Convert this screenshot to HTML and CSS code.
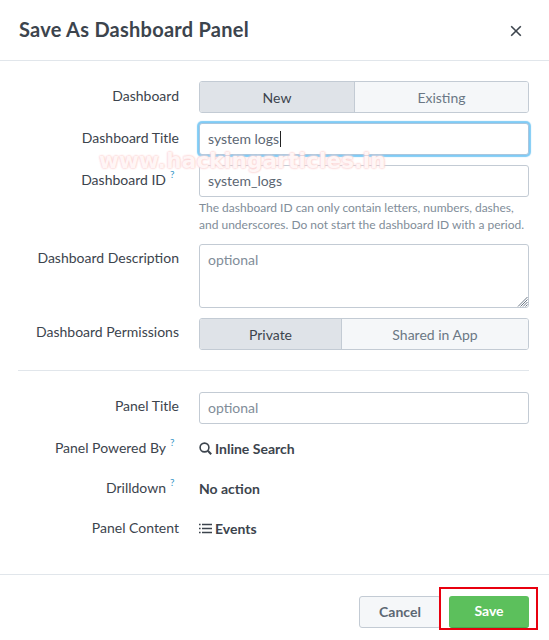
FILE: index.html
```html
<!DOCTYPE html>
<html lang="en">
<head>
    <meta charset="UTF-8">
    <title>Save As Dashboard Panel</title>
    <link rel="stylesheet" href="styles.css">
</head>
<body>
    <div class="modal">
        <div class="modal-header">
            <h1>Save As Dashboard Panel</h1>
            <svg class="close" width="12" height="12" viewBox="0 0 12 12"><path d="M1.2 1.2l9.6 9.6M10.8 1.2l-9.6 9.6" stroke="#3c444d" stroke-width="1.6" fill="none"/></svg>
        </div>

        <div class="modal-body">
            <div class="row row-top">
                <label>Dashboard</label>
                <div class="seg">
                    <span class="seg-on seg-new">New</span>
                    <span class="seg-off">Existing</span>
                </div>
            </div>
            <div class="row row-top">
                <label>Dashboard Title</label>
                <div class="input focus">system logs<i class="caret"></i></div>
            </div>
            <div class="row row-top">
                <label>Dashboard ID<sup>?</sup></label>
                <div class="field">
                    <div class="input">system_logs</div>
                    <p class="help">The dashboard ID can only contain letters, numbers, dashes,<br>and underscores. Do not start the dashboard ID with a period.</p>
                </div>
            </div>
            <div class="row">
                <label>Dashboard Description</label>
                <div class="input textarea placeholder">optional
                    <svg class="grip" width="11" height="11" viewBox="0 0 11 11"><path d="M10.5 1L1 10.5M10.5 3.5L3.5 10.5M10.5 6L6 10.5M10.5 8.5L8.5 10.5" stroke="#6b7785" stroke-width="1" fill="none"/></svg>
                </div>
            </div>
            <div class="row">
                <label>Dashboard Permissions</label>
                <div class="seg">
                    <span class="seg-on seg-private">Private</span>
                    <span class="seg-off">Shared in App</span>
                </div>
            </div>

            <hr>

            <div class="row">
                <label>Panel Title</label>
                <div class="input placeholder">optional</div>
            </div>
            <div class="row row-static">
                <label>Panel Powered By<sup>?</sup></label>
                <div class="value">
                    <svg width="13" height="13" viewBox="0 0 13 13"><circle cx="5.5" cy="5.5" r="4.4" stroke="#3c444d" stroke-width="1.6" fill="none"/><path d="M8.8 8.8l3.4 3.4" stroke="#3c444d" stroke-width="2" fill="none"/></svg>
                    Inline Search
                </div>
            </div>
            <div class="row row-static">
                <label>Drilldown<sup>?</sup></label>
                <div class="value">No action</div>
            </div>
            <div class="row row-static">
                <label>Panel Content</label>
                <div class="value">
                    <svg width="13" height="11" viewBox="0 0 13 11"><path d="M3 1.5h10M3 5.5h10M3 9.5h10" stroke="#3c444d" stroke-width="1.5" fill="none"/><path d="M0 1.5h1.6M0 5.5h1.6M0 9.5h1.6" stroke="#3c444d" stroke-width="1.5" fill="none"/></svg>
                    Events
                </div>
            </div>
        </div>

        <div class="modal-footer">
            <button class="btn">Cancel</button>
            <button class="btn btn-save">Save</button>
        </div>

        <div class="watermark">www.hackingarticles.in</div>
        <div class="redbox"></div>
    </div>
</body>
</html>
```

FILE: styles.css
```css
* {
    box-sizing: border-box;
}
html, body {
    margin: 0;
    height: 100%;
    overflow: hidden;
}
body {
    font-family: "Lato", "Open Sans", sans-serif;
    font-size: 14px;
    color: #3c444d;
    background: #fff;
}
.modal {
    position: relative;
    width: 549px;
    height: 640px;
}
.modal-header {
    display: flex;
    justify-content: space-between;
    align-items: center;
    height: 61px;
    padding: 0 27px 0 19px;
    border-bottom: 1px solid #e1e6eb;
}
.modal-header h1 {
    margin: 0 0 3px;
    font-size: 20px;
    font-weight: 700;
    letter-spacing: 0.25px;
}
.close {
    margin-top: 2px;
}
.modal-body {
    padding: 20px 20px 0 18px;
    height: 513px;
}
.row {
    display: flex;
    align-items: flex-start;
    margin-top: 10px;
}
.row:first-child {
    margin-top: 0;
}
.row label {
    width: 161px;
    margin-right: 20px;
    text-align: right;
    line-height: 27px;
    white-space: nowrap;
}
.row-top label {
    line-height: 29px;
}
.row sup {
    display: inline-block;
    width: 9px;
    margin-left: 4px;
    font-size: 10px;
    line-height: 10px;
    color: #3b97c9;
    text-align: left;
    vertical-align: 7px;
}
.seg {
    display: flex;
    width: 330px;
    height: 32px;
    border: 1px solid #c3cbd4;
    border-radius: 3px;
    line-height: 31px;
    text-align: center;
    overflow: hidden;
}
.seg-on {
    background: #dfe3e8;
    border-right: 1px solid #c3cbd4;
}
.seg-new {
    width: 155px;
}
.seg-private {
    width: 142px;
}
.seg-off {
    flex: 1;
    background: #f5f7f9;
    color: #6b7785;
}
.field {
    width: 330px;
}
.input {
    position: relative;
    width: 330px;
    height: 32px;
    padding: 0 8px;
    border: 1px solid #c3cbd4;
    border-radius: 3px;
    line-height: 29px;
    color: #5c6773;
    background: #fff;
}
.focus {
    border-color: #a9c6de;
    box-shadow: 0 0 1px 2px #7fcbf5;
}
.caret {
    display: inline-block;
    width: 1px;
    height: 16px;
    margin-left: 1px;
    background: #222;
    vertical-align: -3px;
}
.placeholder {
    color: #818d99;
}
.textarea {
    height: 64px;
}
.grip {
    position: absolute;
    right: 0;
    bottom: 0;
}
.help {
    margin: 2px 0 1px;
    font-size: 12px;
    line-height: 17px;
    white-space: nowrap;
    color: #818d99;
}
.modal-body hr {
    margin: 20px 0 21px;
    border: 0;
    border-top: 1px solid #e1e6eb;
}
.row-static {
    height: 30px;
}
.row-static label {
    line-height: 28px;
}
.value {
    display: flex;
    align-items: center;
    gap: 3px;
    height: 28px;
    font-weight: 700;
}
.modal-footer {
    display: flex;
    justify-content: flex-end;
    gap: 8px;
    height: 66px;
    padding: 21px 20px 0 0;
    border-top: 1px solid #e1e6eb;
}
.btn {
    width: 82px;
    height: 32px;
    padding: 0 0 2px;
    border: 1px solid #c3cbd4;
    border-radius: 3px;
    background: #f5f7f9;
    color: #5c6773;
    font: 700 14px "Lato", "Open Sans", sans-serif;
}
.btn-save {
    width: 80px;
    border: 0;
    border-bottom: 1px solid #4aa84f;
    background: #5cc05c;
    color: #fff;
}
.watermark {
    position: absolute;
    left: 99px;
    top: 148px;
    font: 700 21.5px "DejaVu Sans", sans-serif;
    color: #fff6f6;
    letter-spacing: 0.2px;
    text-shadow: 0 0 2px #fbd2d2, 0 0 2px #fbd2d2, 0 0 3px #fce0e0;
    white-space: nowrap;
}
.redbox {
    position: absolute;
    left: 439px;
    top: 587px;
    width: 99px;
    height: 43px;
    border: 2px solid #e8000f;
}
```
